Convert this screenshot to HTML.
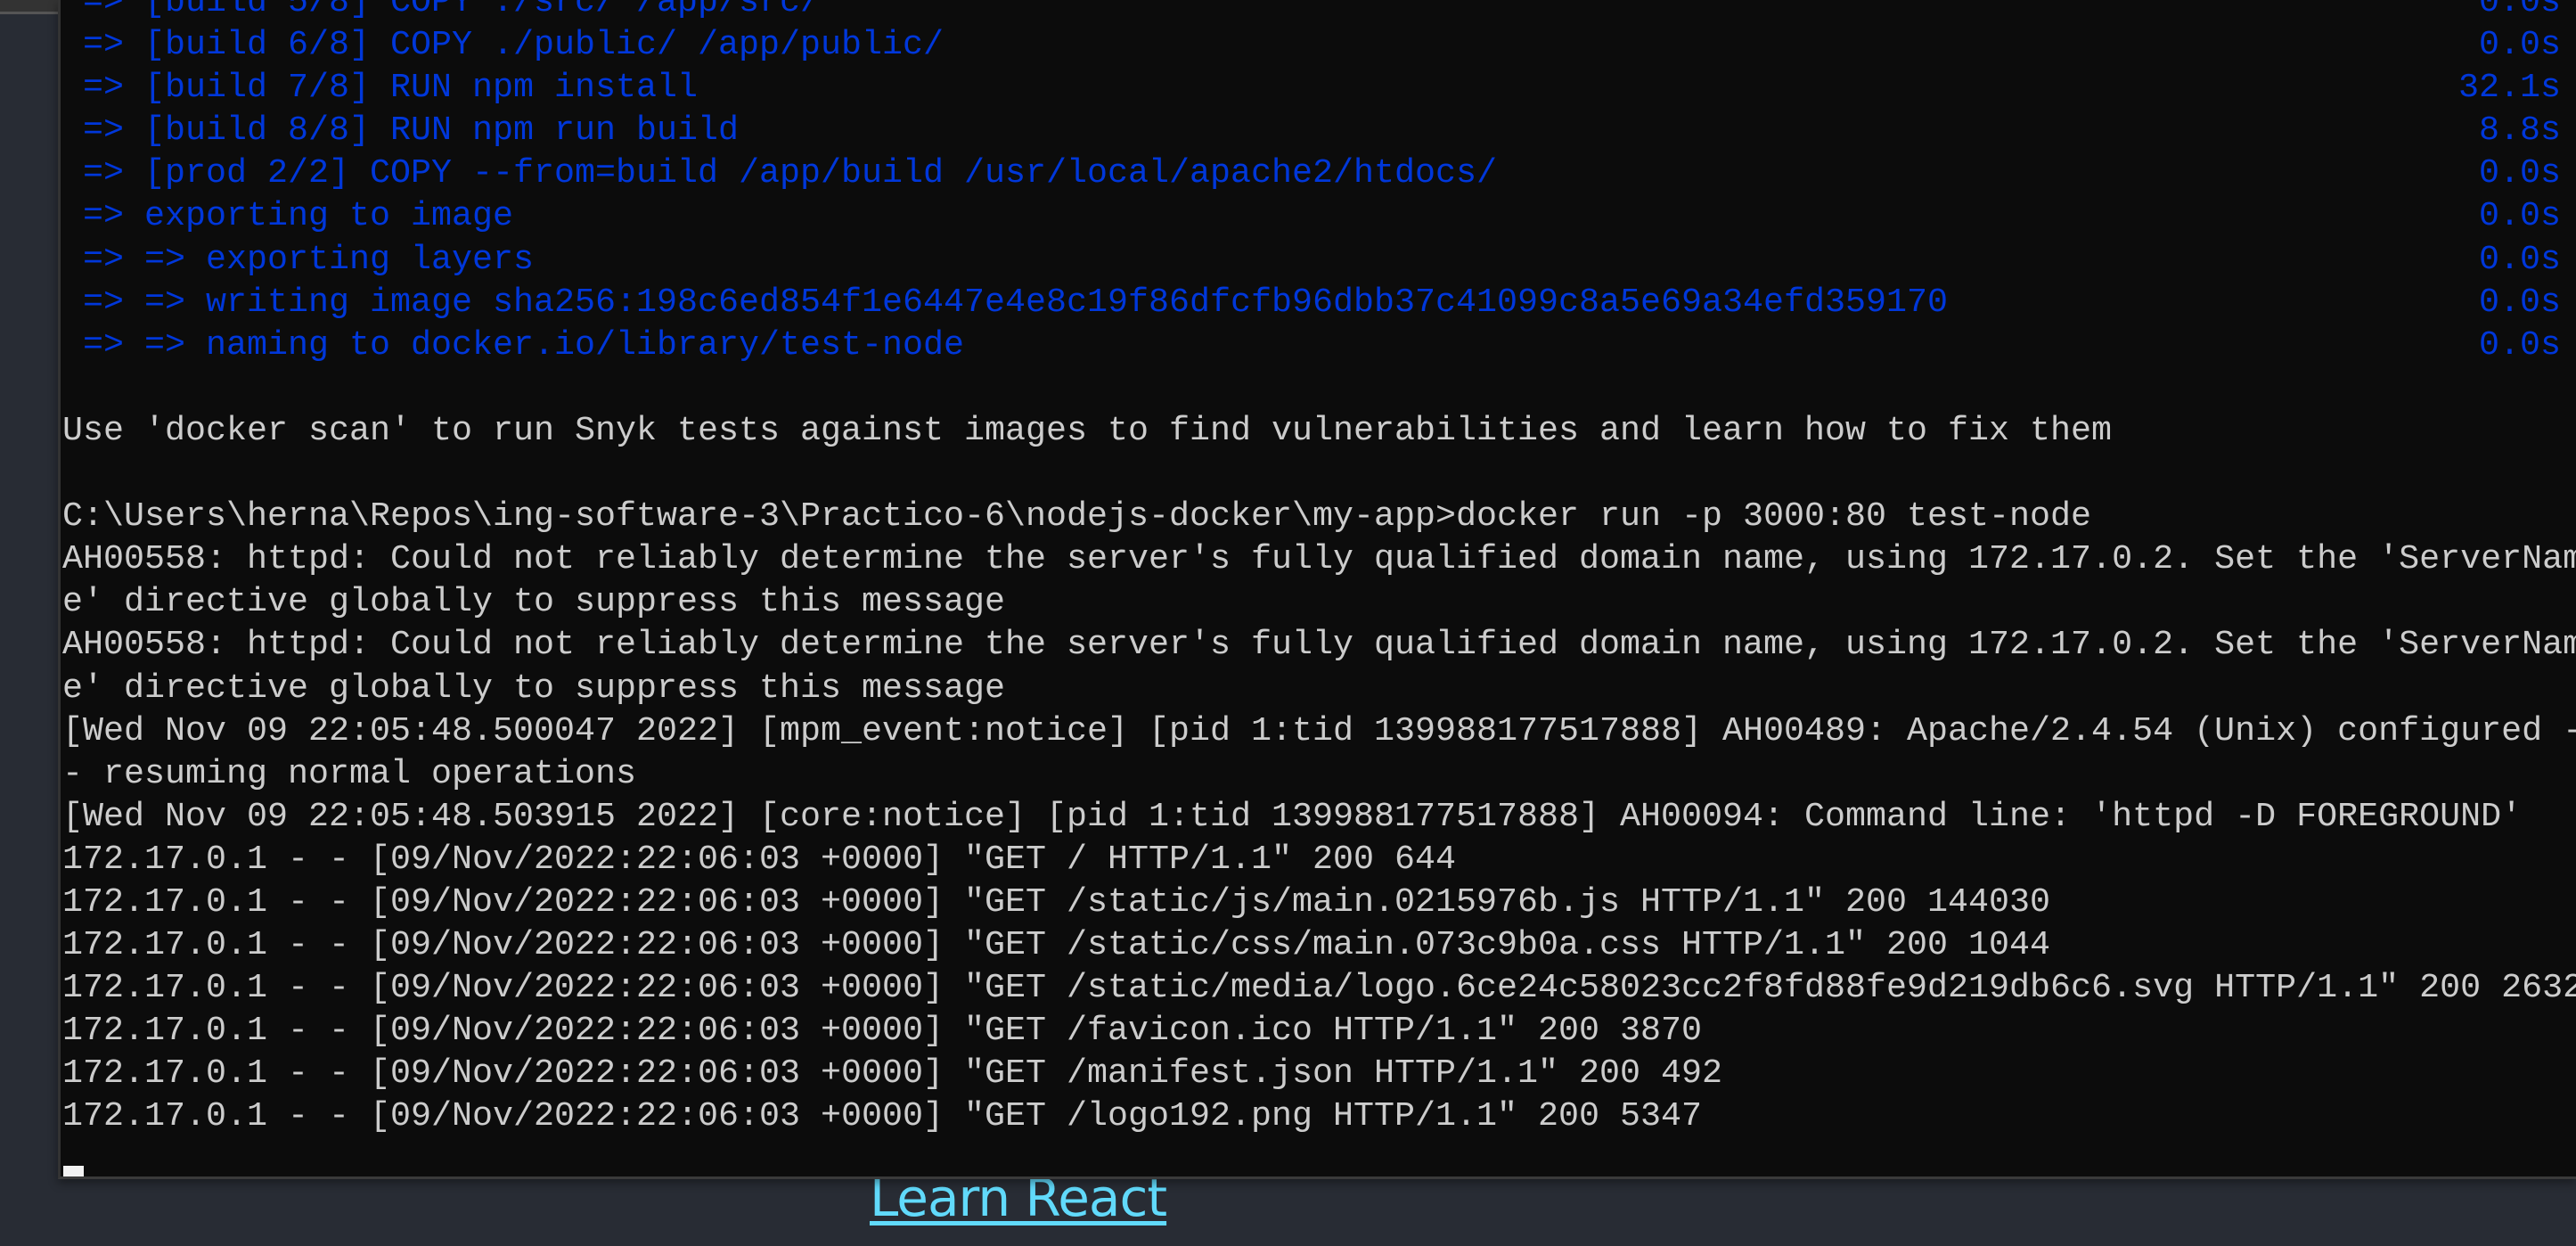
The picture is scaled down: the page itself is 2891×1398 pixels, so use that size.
<!DOCTYPE html>
<html><head><meta charset="utf-8"><style>
html,body{margin:0;padding:0;width:2891px;height:1398px;overflow:hidden;background:#282c34;}
.topbar{position:absolute;left:0;top:0;width:67px;height:13px;background:#333333;}
.topline{position:absolute;left:0;top:13px;width:67px;height:3px;background:#555;}
.learn{position:absolute;left:976px;top:1310px;font-family:"DejaVu Sans","Liberation Sans",sans-serif;font-size:58px;color:#61dafb;text-decoration:underline;text-decoration-thickness:5px;text-underline-offset:6px;letter-spacing:-1px;}
.term{position:absolute;left:65px;top:0;right:0;height:1320px;background:#0c0c0c;border-left:3px solid #333;border-bottom:3px solid #3a3a3a;overflow:hidden;box-shadow:0 4px 10px rgba(0,0,0,.4);}
pre{margin:0;position:absolute;font-family:"Liberation Mono","DejaVu Sans Mono",monospace;font-size:38.33px;line-height:48.1px;white-space:pre;color:#cccccc;}
.main{left:2px;top:-22px;}
.times{right:17px;top:-22px;text-align:right;color:#0037da;}
.b{color:#0037da;}
.cur{position:absolute;left:3px;top:1308px;width:23px;height:12px;background:#f2f2f2;}
</style></head><body>
<div class="topbar"></div><div class="topline"></div>
<div class="learn">Learn React</div>
<div class="term">
<pre class="main"><span class="b"> =&gt; [build 5/8] COPY ./src/ /app/src/
 =&gt; [build 6/8] COPY ./public/ /app/public/
 =&gt; [build 7/8] RUN npm install
 =&gt; [build 8/8] RUN npm run build
 =&gt; [prod 2/2] COPY --from=build /app/build /usr/local/apache2/htdocs/
 =&gt; exporting to image
 =&gt; =&gt; exporting layers
 =&gt; =&gt; writing image sha256:198c6ed854f1e6447e4e8c19f86dfcfb96dbb37c41099c8a5e69a34efd359170
 =&gt; =&gt; naming to docker.io/library/test-node</span>

Use 'docker scan' to run Snyk tests against images to find vulnerabilities and learn how to fix them

C:\Users\herna\Repos\ing-software-3\Practico-6\nodejs-docker\my-app&gt;docker run -p 3000:80 test-node
AH00558: httpd: Could not reliably determine the server's fully qualified domain name, using 172.17.0.2. Set the 'ServerNam
e' directive globally to suppress this message
AH00558: httpd: Could not reliably determine the server's fully qualified domain name, using 172.17.0.2. Set the 'ServerNam
e' directive globally to suppress this message
[Wed Nov 09 22:05:48.500047 2022] [mpm_event:notice] [pid 1:tid 139988177517888] AH00489: Apache/2.4.54 (Unix) configured -
- resuming normal operations
[Wed Nov 09 22:05:48.503915 2022] [core:notice] [pid 1:tid 139988177517888] AH00094: Command line: 'httpd -D FOREGROUND'
172.17.0.1 - - [09/Nov/2022:22:06:03 +0000] "GET / HTTP/1.1" 200 644
172.17.0.1 - - [09/Nov/2022:22:06:03 +0000] "GET /static/js/main.0215976b.js HTTP/1.1" 200 144030
172.17.0.1 - - [09/Nov/2022:22:06:03 +0000] "GET /static/css/main.073c9b0a.css HTTP/1.1" 200 1044
172.17.0.1 - - [09/Nov/2022:22:06:03 +0000] "GET /static/media/logo.6ce24c58023cc2f8fd88fe9d219db6c6.svg HTTP/1.1" 200 2632
172.17.0.1 - - [09/Nov/2022:22:06:03 +0000] "GET /favicon.ico HTTP/1.1" 200 3870
172.17.0.1 - - [09/Nov/2022:22:06:03 +0000] "GET /manifest.json HTTP/1.1" 200 492
172.17.0.1 - - [09/Nov/2022:22:06:03 +0000] "GET /logo192.png HTTP/1.1" 200 5347</pre>
<pre class="times">0.0s
0.0s
32.1s
8.8s
0.0s
0.0s
0.0s
0.0s
0.0s</pre>
<div class="cur"></div>
</div>
</body></html>
